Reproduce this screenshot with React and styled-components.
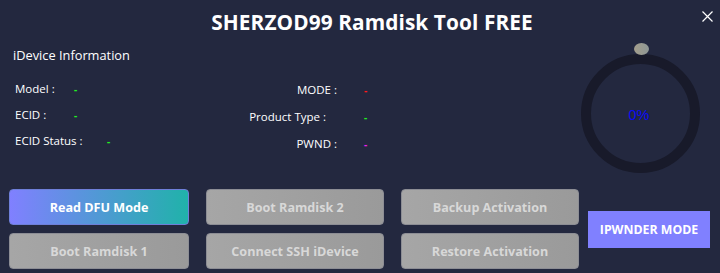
import React from "react";
import styled, { createGlobalStyle } from "styled-components";

const Global = createGlobalStyle`
  html, body {
    margin: 0;
    padding: 0;
    background: #23283f;
  }
  * { box-sizing: border-box; }
`;

const Window = styled.div`
  width: 720px;
  height: 273px;
  background: #23283f;
  font-family: "Open Sans", "Noto Sans", sans-serif;
  color: #ffffff;
  display: flex;
  flex-direction: column;
  overflow: hidden;
`;

const TitleBar = styled.div`
  display: grid;
  grid-template-columns: 1fr auto 1fr;
  align-items: center;
  height: 42px;
  padding: 0 6px 0 0;
`;

const Title = styled.h1`
  grid-column: 2;
  margin: 1px 0 0 30px;
  font-size: 20.8px;
  font-weight: 700;
  letter-spacing: 0.1px;
  white-space: nowrap;
`;

const CloseButton = styled.button`
  grid-column: 3;
  justify-self: end;
  align-self: start;
  margin-top: 9px;
  width: 14px;
  height: 14px;
  padding: 0;
  border: 0;
  background: transparent;
  color: #ffffff;
  display: flex;
  align-items: center;
  justify-content: center;
  cursor: pointer;
`;

const Body = styled.div`
  display: flex;
  height: 132px;
`;

const InfoPanel = styled.div`
  flex: 1;
  padding: 3px 0 0 13px;
`;

const SectionTitle = styled.div`
  font-size: 12.8px;
  font-weight: 400;
  height: 20px;
  line-height: 20px;
`;

const Columns = styled.div`
  display: flex;
  margin-top: 15px;
`;

const LeftCol = styled.div`
  width: 230px;
  padding-left: 2px;
  display: flex;
  flex-direction: column;
  gap: 9px;
`;

const RightCol = styled.div`
  display: grid;
  grid-template-columns: 94px 30px;
  grid-auto-rows: 17px;
  row-gap: 10px;
  align-items: center;
  margin-top: 1px;
`;

const Row = styled.div`
  display: flex;
  align-items: center;
  height: 17px;
`;

const Label = styled.span`
  display: inline-block;
  width: ${(p) => p.$w || "auto"};
  font-size: 11.5px;
  white-space: nowrap;
  text-align: ${(p) => (p.$right ? "right" : "left")};
  padding-right: ${(p) => p.$pr || "0"};
`;

const Value = styled.span`
  font-size: 10px;
  font-weight: 700;
  line-height: 1;
  color: ${(p) => p.$color};
  padding-left: ${(p) => p.$pl || "0"};
`;

const ProgressPanel = styled.div`
  width: 160px;
  display: flex;
  flex-direction: column;
  align-items: center;
  padding-top: 1px;
`;

const Knob = styled.div`
  width: 15px;
  height: 12px;
  border-radius: 50%;
  background: linear-gradient(90deg, #a39e8c, #8e9795);
  margin-left: 2px;
  position: relative;
  z-index: 1;
`;

const Ring = styled.div`
  width: 119px;
  height: 119px;
  margin-top: -1px;
  border-radius: 50%;
  border: 10px solid #181a2a;
  display: flex;
  align-items: center;
  justify-content: center;
  color: #0a0af5;
  font-family: "Liberation Sans", sans-serif;
  font-size: 14.5px;
  padding: 2px 2px 0 0;
`;

const Footer = styled.div`
  display: flex;
  align-items: center;
  padding: 15px 10px 0 9px;
  gap: 9px;
`;

const ButtonGrid = styled.div`
  display: grid;
  grid-template-columns: 180px 178px 178px;
  grid-auto-rows: 36px;
  column-gap: 17px;
  row-gap: 8px;
`;

const ActionButton = styled.button`
  font-family: "Open Sans", "Noto Sans", sans-serif;
  font-size: 12.6px;
  font-weight: 700;
  border-radius: 4px;
  border: 1px solid ${(p) => (p.$primary ? "#6e7fd8" : "#8c8d94")};
  color: ${(p) => (p.$primary ? "#ffffff" : "#d8d8d8")};
  background: ${(p) =>
    p.$primary
      ? "linear-gradient(90deg, #8080ff 0%, #20b2aa 100%)"
      : "linear-gradient(90deg, #a6a6a6 0%, #9a9a9a 100%)"};
  cursor: pointer;
`;

const ModeButton = styled.button`
  width: 122px;
  height: 37px;
  border: 0;
  border-radius: 0;
  background: #8080ff;
  color: #ffffff;
  font-family: "Open Sans", "Noto Sans", sans-serif;
  font-size: 12.3px;
  font-weight: 700;
  cursor: pointer;
`;

const leftRows = [
  { label: "Model :", w: "59px" },
  { label: "ECID :", w: "59px" },
  { label: "ECID Status :", w: "92px" },
];

const rightRows = [
  { label: "MODE :", color: "#ff1a1a", pr: "0" },
  { label: "Product Type :", color: "#22ee22", pr: "11px" },
  { label: "PWND :", color: "#ee22ee", pr: "0" },
];

const buttons = [
  { text: "Read DFU Mode", primary: true },
  { text: "Boot Ramdisk 2" },
  { text: "Backup Activation" },
  { text: "Boot Ramdisk  1" },
  { text: "Connect SSH iDevice" },
  { text: "Restore Activation" },
];

export default function App() {
  return (
    <Window>
      <Global />
      <TitleBar>
        <Title>SHERZOD99 Ramdisk Tool FREE</Title>
        <CloseButton aria-label="Close">
          <svg width="11" height="11" viewBox="0 0 11 11">
            <path d="M0.5 0.5 L10.5 10.5 M10.5 0.5 L0.5 10.5" stroke="#fff" strokeWidth="1.2" />
          </svg>
        </CloseButton>
      </TitleBar>
      <Body>
        <InfoPanel>
          <SectionTitle>iDevice Information</SectionTitle>
          <Columns>
            <LeftCol>
              {leftRows.map((r) => (
                <Row key={r.label}>
                  <Label $w={r.w}>{r.label}</Label>
                  <Value $color="#22ee22">-</Value>
                </Row>
              ))}
            </LeftCol>
            <RightCol>
              {rightRows.map((r) => (
                <React.Fragment key={r.label}>
                  <Label $right $pr={r.pr}>{r.label}</Label>
                  <Value $color={r.color} $pl="27px">-</Value>
                </React.Fragment>
              ))}
            </RightCol>
          </Columns>
        </InfoPanel>
        <ProgressPanel>
          <Knob />
          <Ring>0%</Ring>
        </ProgressPanel>
      </Body>
      <Footer>
        <ButtonGrid>
          {buttons.map((b) => (
            <ActionButton key={b.text} $primary={b.primary}>
              {b.text}
            </ActionButton>
          ))}
        </ButtonGrid>
        <ModeButton>IPWNDER MODE</ModeButton>
      </Footer>
    </Window>
  );
}
